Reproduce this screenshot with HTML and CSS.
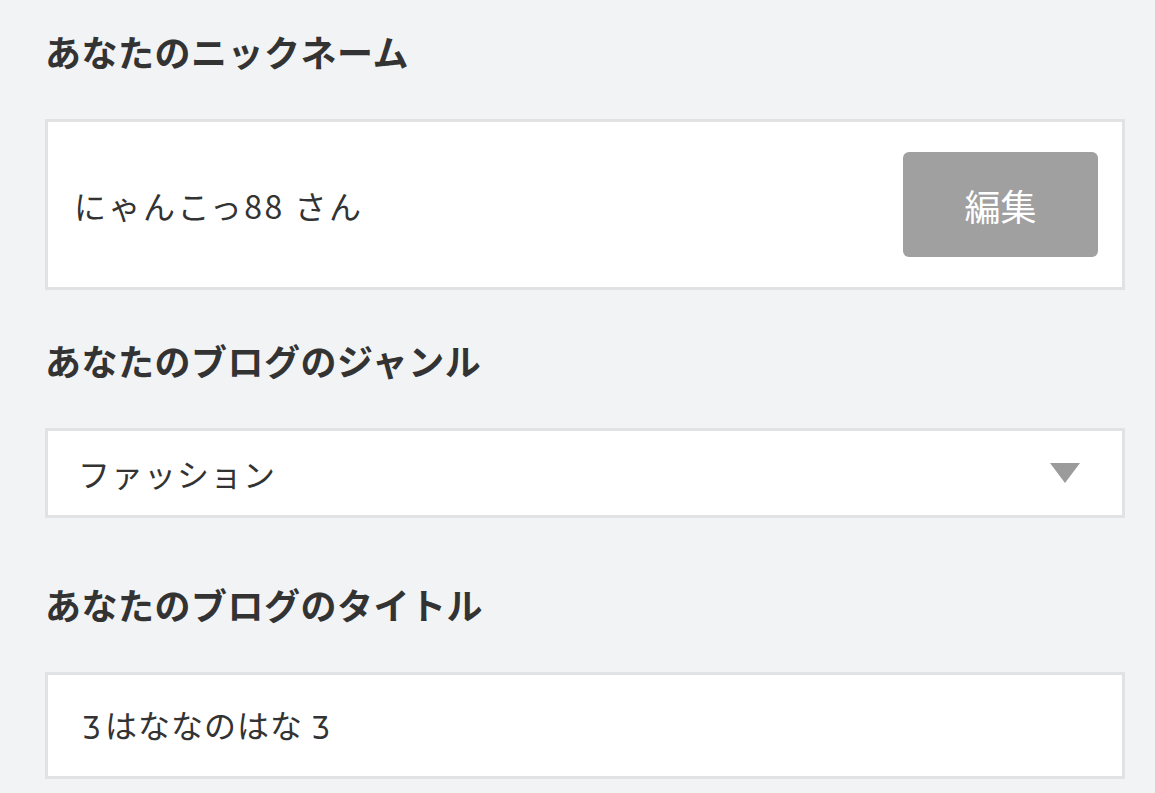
FILE: index.html
```html
<!DOCTYPE html>
<html lang="ja">
<head>
  <meta charset="UTF-8" />
  <meta name="viewport" content="width=device-width, initial-scale=1.0"/>
  <title>プロフィール設定</title>
  <link rel="stylesheet" href="styles.css">
</head>
<body>
  <main class="settings">
    <section class="field">
      <h2 class="field-label">あなたのニックネーム</h2>
      <div class="field-box nickname">
        <span class="field-value">にゃんこっ88 さん</span>
        <button type="button" class="edit-btn">編集</button>
      </div>
    </section>

    <section class="field">
      <h2 class="field-label">あなたのブログのジャンル</h2>
      <div class="field-box genre">
        <span class="field-value">ファッション</span>
        <svg class="caret" width="30" height="20" viewBox="0 0 30 20">
          <polygon points="0,0 30,0 15,20" fill="#9b9b9b"/>
        </svg>
      </div>
    </section>

    <section class="field">
      <h2 class="field-label">あなたのブログのタイトル</h2>
      <div class="field-box blog-title">
        <span class="field-value"><span class="deco">Ʒ</span>はななのはな <span class="deco">Ʒ</span></span>
      </div>
    </section>
  </main>
</body>
</html>
```

FILE: styles.css
```css
html, body {
  margin: 0;
  padding: 0;
  background-color: #f2f3f5;
  color: #333;
  font-family: "Noto Sans CJK JP", "Noto Sans", sans-serif;
}

.settings {
  padding: 33px 30px 0 45px;
}

.field-label {
  margin: 0 0 50px;
  font-size: 36px;
  line-height: 36px;
  font-weight: bold;
  letter-spacing: 0.5px;
  color: #333;
}

.field-box {
  display: flex;
  align-items: center;
  box-sizing: border-box;
  background-color: #fff;
  border: 3px solid #e1e2e4;
}

.field-value {
  font-size: 32px;
  line-height: 1;
  color: #333;
}

.nickname {
  height: 171px;
  justify-content: space-between;
  padding: 0 24px 0 26px;
  margin-bottom: 52px;
}

.nickname .field-value {
  letter-spacing: 2.5px;
}

.edit-btn {
  width: 195px;
  height: 105px;
  border: none;
  border-radius: 6px;
  background-color: #a0a0a0;
  color: #fff;
  font-family: inherit;
  font-size: 36px;
  cursor: pointer;
}

.genre {
  height: 90px;
  justify-content: space-between;
  padding: 0 42px 0 30px;
  margin-bottom: 68px;
}

.genre .field-value {
  letter-spacing: 1px;
}

.blog-title {
  height: 107px;
  padding: 0 30px 0 34px;
}

.blog-title .field-value {
  letter-spacing: 1px;
}

.deco {
  font-family: "DejaVu Sans Condensed", "DejaVu Sans", sans-serif;
  font-size: 30px;
  margin-right: 4px;
}
```
